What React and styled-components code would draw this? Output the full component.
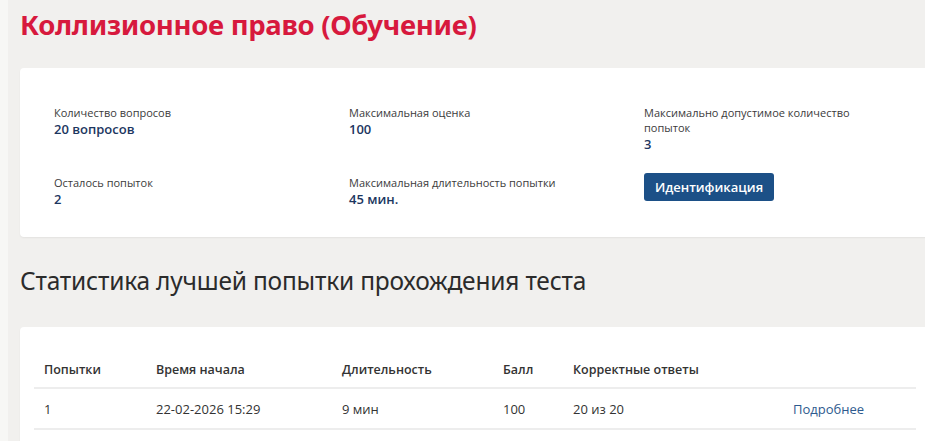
import React from 'react'
import styled, { createGlobalStyle } from 'styled-components'

const GlobalStyle = createGlobalStyle`
  html, body {
    margin: 0;
    padding: 0;
    background: #f7f7f5;
    font-family: "Open Sans", "Noto Sans", sans-serif;
    overflow: hidden;
  }
`

const Page = styled.div`
  margin-left: 8px;
  min-height: 441px;
  background: #f1f0ee;
  padding: 6px 0 0 12px;
`

const Title = styled.h1`
  margin: 0 0 24px;
  font-family: "Noto Sans", "Open Sans", sans-serif;
  font-size: 27.5px;
  font-weight: 700;
  line-height: 38px;
  color: #d7193d;
  letter-spacing: -0.3px;
`

const Card = styled.div`
  background: #fff;
  border-radius: 4px 0 0 4px;
  box-shadow: 0 1px 2px rgba(0, 0, 0, 0.06);
  margin-right: -10px;
  padding: ${props => props.pad};
`

const InfoGrid = styled.div`
  display: grid;
  grid-template-columns: 295px 295px 260px;
  row-gap: 22px;
`

const Info = styled.div`
  display: flex;
  flex-direction: column;
  gap: 1px;
`

const Label = styled.span`
  font-size: 11px;
  line-height: 15px;
  color: #3b3b3b;
  max-width: 215px;
`

const Value = styled.span`
  font-size: 13px;
  font-weight: 600;
  line-height: 17px;
  color: #1c365f;
`

const Button = styled.button`
  align-self: flex-start;
  width: 130px;
  height: 28px;
  margin-top: -2px;
  border: none;
  border-radius: 3px;
  background: #1c5087;
  color: #fff;
  font-family: "Open Sans", sans-serif;
  font-size: 13px;
  font-weight: 600;
`

const SectionTitle = styled.h2`
  margin: 29px 0 31px;
  font-family: "Noto Sans", "Open Sans", sans-serif;
  font-size: 24.5px;
  font-weight: 400;
  line-height: 30px;
  color: #2b2b2b;
  letter-spacing: -0.2px;
`

const Table = styled.table`
  width: 882px;
  border-collapse: collapse;
  font-size: 13px;
  color: #333;
`

const Th = styled.th`
  text-align: left;
  font-size: 12.5px;
  font-weight: 600;
  height: 36px;
  padding: 0 10px;
  vertical-align: middle;
  border-bottom: 2px solid #ededed;
  width: ${props => props.w || 'auto'};
`

const Td = styled.td`
  height: 39px;
  padding: 0 10px;
  border-bottom: 2px solid #ededed;
`

const MoreLink = styled.a`
  color: #2e5a8e;
  text-decoration: none;
`

const info = [
  { label: 'Количество вопросов', value: '20 вопросов' },
  { label: 'Максимальная оценка', value: '100' },
  { label: 'Максимально допустимое количество попыток', value: '3' },
  { label: 'Осталось попыток', value: '2' },
  { label: 'Максимальная длительность попытки', value: '45 мин.' },
]

export default function App() {
  return (
    <>
      <GlobalStyle />
      <Page>
        <Title>Коллизионное право (Обучение)</Title>
        <Card pad="37px 34px 29px">
          <InfoGrid>
            {info.map(item => (
              <Info key={item.label}>
                <Label>{item.label}</Label>
                <Value>{item.value}</Value>
              </Info>
            ))}
            <Info>
              <Button>Идентификация</Button>
            </Info>
          </InfoGrid>
        </Card>
        <SectionTitle>Статистика лучшей попытки прохождения теста</SectionTitle>
        <Card pad="24px 14px 20px">
          <Table>
            <thead>
              <tr>
                <Th w="92px">Попытки</Th>
                <Th w="166px">Время начала</Th>
                <Th w="141px">Длительность</Th>
                <Th w="50px">Балл</Th>
                <Th w="200px">Корректные ответы</Th>
                <Th />
              </tr>
            </thead>
            <tbody>
              <tr>
                <Td>1</Td>
                <Td>22-02-2026 15:29</Td>
                <Td>9 мин</Td>
                <Td>100</Td>
                <Td>20 из 20</Td>
                <Td>
                  <MoreLink href="#">Подробнее</MoreLink>
                </Td>
              </tr>
            </tbody>
          </Table>
        </Card>
      </Page>
    </>
  )
}
